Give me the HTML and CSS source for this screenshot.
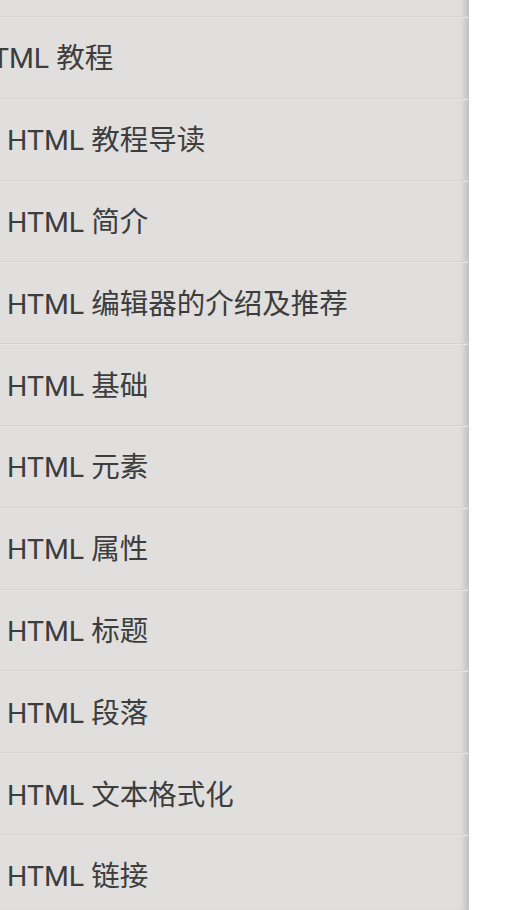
FILE: index.html
```html
<!DOCTYPE html>
<html lang="zh-CN">
<head>
	<meta charset="UTF-8">
	<title>HTML 教程</title>
	<link rel="stylesheet" href="styles.css">
</head>
<body>
	<div class="side">
		<ul class="menu">
			<li class="item"></li>
			<li class="item parent">HTML 教程</li>
			<li class="item">HTML 教程导读</li>
			<li class="item">HTML 简介</li>
			<li class="item">HTML 编辑器的介绍及推荐</li>
			<li class="item">HTML 基础</li>
			<li class="item">HTML 元素</li>
			<li class="item">HTML 属性</li>
			<li class="item">HTML 标题</li>
			<li class="item">HTML 段落</li>
			<li class="item">HTML 文本格式化</li>
			<li class="item">HTML 链接</li>
		</ul>
	</div>
</body>
</html>
```
FILE: styles.css
```css
html,body,ul,li{padding: 0;margin: 0;}
li{list-style: none;}
body{background: #fff;overflow: hidden;height: 910px;font-family: Roboto, "Noto Sans CJK SC", sans-serif;}

.side{width: 496px;height: 975px;margin-left: -28px;margin-top: -64.8px;background: #e0dfdd;box-shadow: inset -7px 0 7px -5px rgba(0,0,0,0.18);border-right: 1px solid #c4c4c4;}
.menu{display: flex;flex-direction: column;}
.item{box-sizing: border-box;height: 81.8px;display: flex;align-items: center;padding-left: 35px;padding-bottom: 3px;font-size: 28.5px;color: #3d3d3d;border-bottom: 1px solid #d3d2d0;box-shadow: 0 1px 0 #e6e5e3;}
.item.parent{padding-left: 0;}
```
